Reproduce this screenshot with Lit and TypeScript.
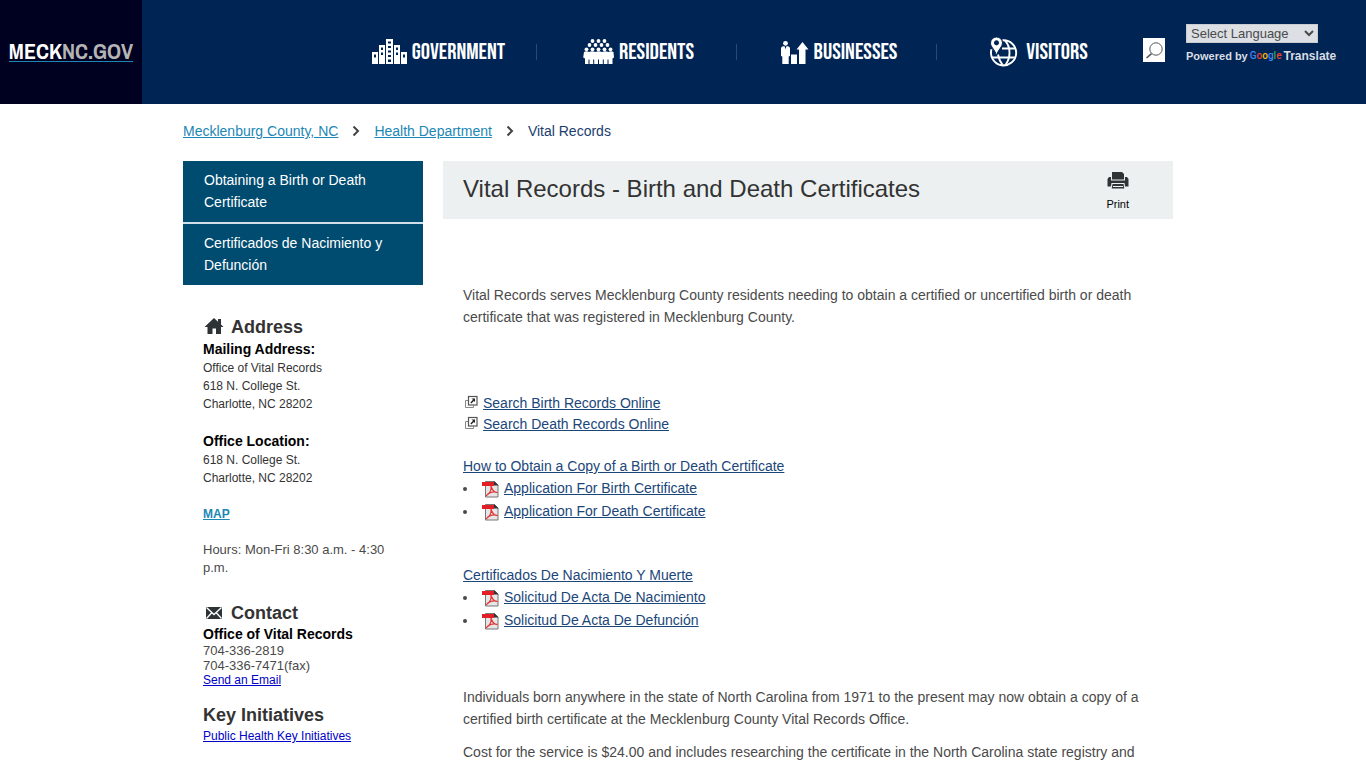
import { LitElement, html, css, svg } from "lit";
import { customElement } from "lit/decorators.js";

const governmentIcon = html`<svg class="nav-icon" width="35" height="26" viewBox="0 0 35 26" aria-hidden="true">
  <path fill="#fff" fill-rule="evenodd" d="M0 13h6v12H0zM2 15.500v3h2v-3zM7 6h6v19H7zM9 8.500v2.500h2V8.500zM9 13.500V16h2v-2.500zM14 0h7v25h-7zM16 2.500v2h3v-2zM16 7v2h3V7zM16 11.500v2h3v-2zM16 16v2h3v-2zM16 20.500V23h3v-2.500zM22 6h6v19h-6zM24 8.500v2.500h2V8.500zM24 13.500V16h2v-2.500zM29 13h6v12h-6zM31 15.500v3h2v-3z"/>
</svg>`;

const crowdRows = [
  { y: 2, xs: [9.5, 15.5, 21.5] },
  { y: 6, xs: [6.5, 12.5, 18.5, 24.5] },
  { y: 10.3, xs: [3.5, 9.5, 15.5, 21.5, 27.5] },
];
const residentsIcon = html`<svg class="nav-icon" width="31" height="26" viewBox="0 0 31 26" aria-hidden="true">
  ${crowdRows.map((r) => r.xs.map((x) => svg`<circle cx=${x} cy=${r.y} r="1.9" fill="#fff"/>`))}
  <path fill="#fff" d="M1 13q2.500-1.500 5 0q3-1.500 6.500 0q3-1.500 6.500 0q3-1.500 6.500 0q2.500-1.500 5 0l.5 5.500-1.500 1V25h-4v-4.500h-1V25h-3.700v-4.500h-1V25h-3.800v-4.500h-1V25h-3.800v-4.500h-1V25H6.500v-4.500h-1V25h-3.500v-5.500l-1.800-1z"/>
</svg>`;

const businessesIcon = html`<svg class="nav-icon" width="29" height="26" viewBox="0 0 29 26" aria-hidden="true">
  <circle cx="5.500" cy="4.300" r="2.400" fill="#fff"/>
  <path fill="#fff" d="M3 7.200h1.600l.9 3 .9-3H8q2 .3 2 2V17l-1.300.5V25H2.300v-7.500L1 17V9.200q0-1.700 2-2zM11 15.500h6V25h-6zM22.500 3l6 7.500h-3V25h-6.500V10.500h-2.500z"/>
</svg>`;

const visitorsIcon = html`<svg class="nav-icon" width="29" height="30" viewBox="0 0 29 30" aria-hidden="true">
  <g fill="none" stroke="#fff" stroke-width="1.900">
    <path d="M13.500 3.300a12.600 12.600 0 1 1-11 9"/>
    <path d="M16 3.500c6 6.500 6 18 0 25M9 17.500c.8 4.500 2.500 8 5 11M13 11.500h13.500M3 20.500h23.500"/>
  </g>
  <path fill="#fff" stroke="#002554" stroke-width="1" fill-rule="evenodd" d="M7.500 0a6 6 0 0 1 6 6c0 4-4.500 6.500-6 12.500C6 12.500 1.500 10 1.500 6a6 6 0 0 1 6-6zM7.500 3.700a2 2 0 1 0 0 4.200 2 2 0 0 0 0-4.200z"/>
</svg>`;

const searchIcon = html`<svg width="22" height="24" viewBox="0 0 22 24" aria-hidden="true">
  <g fill="none" stroke="#555"><circle cx="13" cy="11" r="6.200" stroke-width="1"/><path stroke-width="1.600" d="M8.500 15.700 3.500 20"/></g>
</svg>`;

const chevron = html`<svg class="chevron" width="8" height="12" viewBox="0 0 8 12" aria-hidden="true">
  <path d="M1.500 1.500 6 6l-4.500 4.500" fill="none" stroke="#444" stroke-width="2"/>
</svg>`;

const printIcon = html`<svg width="22" height="17" viewBox="0 0 22 17" aria-hidden="true">
  <path fill="#2e3436" d="M5 0h10l2 2v5.500H5zM2 5h2v3.500h14V5h2l1.500 2v7.500h-3.500L17.500 11h-13L4 14.500H.5V7zM5.500 12h11l.8 4.500H4.700z"/>
  <path stroke="#ecf0f1" d="M6 14.500h10"/>
</svg>`;

const houseIcon = html`<svg width="22" height="18" viewBox="0 0 22 18" aria-hidden="true">
  <path fill="#2e3436" d="M11 0 15 3.800V1h3v5.600L20.500 9H18v7h-5v-5.500H9.500V16h-5V9H1.500z"/>
</svg>`;

const mailIcon = html`<svg width="22" height="18" viewBox="0 0 22 18" aria-hidden="true">
  <rect x="3" y="3" width="16" height="12" fill="#2e3436"/>
  <path fill="none" stroke="#fff" stroke-width="1.300" d="M3.500 3.500 11 10.500l7.500-7M3.500 14.500l5-5.500M18.500 14.500l-5-5.500"/>
</svg>`;

const windowIcon = html`<svg class="window-icon" width="20" height="16" viewBox="0 0 20 16" aria-hidden="true">
  <g fill="none" stroke="#555"><path stroke="#888" d="M5 5.500H2.500v7h8V10.500"/><rect x="5.500" y="1.500" width="8.500" height="8.500" stroke-width="1.200"/></g>
  <path fill="#222" d="M8.500 3.500H12V7l-1.100-1.100-2.600 2.600-.9-.9L10 4.800z"/>
</svg>`;

const pdfIcon = html`<svg class="pdf-icon" width="17" height="19" viewBox="0 0 17 19" aria-hidden="true">
  <path fill="#e6e6e6" stroke="#777" d="M3.500 2.500h9L16 6v12H3.500z"/>
  <path fill="#333" d="M12 2v4.500h4.500z"/>
  <path fill="#e41e26" d="M0 3h12v4H0z"/>
  <path fill="none" stroke="#e23a3a" stroke-width="1.300" d="M9 7c.5 4-1.500 8-4.500 9.500 1.500-3 7-4.500 11-3-3 0-5.500-2.500-6.500-6.500"/>
</svg>`;

@customElement("app-root")
export class AppRoot extends LitElement {
  static styles = css`
    :host {
      display: block;
      background: #fff;
      color: #4a4a4a;
      font: 14px/22px "Liberation Sans", Arial, sans-serif;
    }
    h1, h2, h3, p, ul, ol { margin: 0; padding: 0; }
    svg { display: block; flex: none; }
    header {
      display: flex;
      align-items: stretch;
      height: 104px;
      background: #002554;
    }
    .logo {
      display: flex;
      align-items: center;
      justify-content: center;
      width: 142px;
      padding-bottom: 2px;
      box-sizing: border-box;
      background: #000020;
      color: #fff;
      font: bold 22px/28px "Franklin Gothic Medium Cond", "Archivo Narrow", "Roboto Condensed", "Liberation Sans", sans-serif;
      text-decoration: none;
    }
    .logo-text { border-bottom: 1px solid #1c87b5; line-height: 20px; }
    .logo-light { color: #b4b4b4; }
    nav {
      display: flex;
      flex: 0 1 800px;
      align-items: center;
      margin-left: auto;
    }
    .nav-link {
      display: flex;
      flex: 1;
      align-items: center;
      justify-content: center;
      gap: 5px;
      height: 16px;
      padding-left: 4px;
      color: #fff;
      font: 23px/24px "Bebas Neue", "Liberation Sans Narrow", "Arial Narrow", sans-serif;
      text-decoration: none;
      border-right: 1px solid #2b4a73;
    }
    .nav-link:last-child { border-right-color: transparent; }
    .nav-link.spaced { gap: 8px; }
    .tools { display: flex; width: 229px; gap: 21px; padding-left: 6px; box-sizing: border-box; }
    .search {
      align-self: flex-start;
      margin-top: 38px;
      padding: 0;
      border: 0;
      background: #fff;
    }
    .translate { padding-top: 24px; color: #d9dde3; font-size: 11px; line-height: 18px; font-weight: bold; }
    .language {
      display: block;
      width: 132px;
      height: 19px;
      padding: 0;
      border: 1px solid #c9ccd1;
      border-radius: 0;
      background: #dcdfe4;
      color: #4a4a4a;
      font: 13px/17px "Liberation Sans", Arial, sans-serif;
    }
    .powered { display: flex; align-items: center; gap: 2px; margin-top: 4px; white-space: nowrap; }
    .google { font: 500 10px/18px Roboto, sans-serif; }
    .blue { color: #4285f4; }
    .red { color: #ea4335; }
    .yellow { color: #fbbc05; }
    .green { color: #34a853; }
    .translate-word { font-size: 12px; color: #d9dde3; text-decoration: none; }
    .page { max-width: 1000px; margin: 0 auto; }
    .crumbs { display: flex; align-items: center; gap: 14px; height: 22px; padding: 16px 0 19px; list-style: none; }
    .crumbs li { display: flex; align-items: center; gap: 14px; color: #1b3d6e; }
    .crumbs a, .map { color: #1c87b5; }
    .columns { display: grid; grid-template-columns: 240px minmax(0, 1fr); gap: 20px; padding-right: 10px; }
    .menu { display: grid; gap: 2px; background: #cfe0e8; }
    .menu a { padding: 8px 21px 9px; background: #004b70; color: #fff; text-decoration: none; }
    .info { padding: 31px 30px 0 20px; font-size: 12px; line-height: 18px; }
    .info h2 { display: flex; align-items: center; gap: 6px; margin-bottom: 1px; color: #333; font-size: 18px; line-height: 22px; }
    .info h3 { color: #000; font-size: 14px; line-height: 20px; }
    .info .dark { color: #333; }
    .block { margin-bottom: 18px; }
    .map { font-weight: bold; }
    .info .larger { font-size: 13px; }
    .contact { margin-top: 25px; line-height: 15px; }
    .contact h3 { line-height: 18px; }
    .initiatives { margin-top: 16px; }
    .info .plain { color: #0000c8; }
    .title-bar {
      display: flex;
      align-items: center;
      justify-content: space-between;
      height: 56px;
      padding: 0 44px 2px 20px;
      background: #ecf0f1;
    }
    h1 { color: #333; font-size: 24px; line-height: 30px; font-weight: normal; }
    .print {
      display: grid;
      justify-items: center;
      gap: 8px;
      margin-top: 4px;
      padding: 0;
      border: 0;
      background: none;
      color: #000;
      font: 11px/14px "Liberation Sans", Arial, sans-serif;
    }
    .content { padding: 65px 20px 0; }
    .content a { color: #1b4679; }
    .searches { padding-top: 65px; line-height: 21px; }
    .searches a { display: flex; align-items: center; width: fit-content; text-decoration: none; }
    .searches span { text-decoration: underline; }
    .window-icon { margin-bottom: 2px; }
    .group { padding-top: 21px; line-height: 21px; }
    .group + .group { padding-top: 42px; }
    .files li { display: flex; align-items: center; height: 23px; }
    .files li::before { content: ""; width: 4px; height: 4px; margin-right: 15px; border-radius: 2px; background: #4a4a4a; }
    .pdf-icon { margin-right: 5px; }
    .notes { display: grid; gap: 11px; padding-top: 54px; }
  `;

  render() {
    return html`
      <header>
        <a class="logo" href="#"><span class="logo-text">MECK<span class="logo-light">NC.GOV</span></span></a>
        <nav aria-label="Main">
          <a class="nav-link" href="#">${governmentIcon}<span>GOVERNMENT</span></a>
          <a class="nav-link" href="#">${residentsIcon}<span>RESIDENTS</span></a>
          <a class="nav-link" href="#">${businessesIcon}<span>BUSINESSES</span></a>
          <a class="nav-link spaced" href="#">${visitorsIcon}<span>VISITORS</span></a>
        </nav>
        <div class="tools">
          <button class="search" type="button" aria-label="Search">${searchIcon}</button>
          <div class="translate">
            <select class="language" aria-label="Select Language"><option>Select Language</option></select>
            <div class="powered">
              <span>Powered by</span>
              <span class="google"><span class="blue">G</span><span class="red">o</span><span class="yellow">o</span><span class="blue">g</span><span class="green">l</span><span class="red">e</span></span>
              <a class="translate-word" href="#">Translate</a>
            </div>
          </div>
        </div>
      </header>
      <div class="page">
        <ol class="crumbs">
          <li><a href="#">Mecklenburg County, NC</a>${chevron}</li>
          <li><a href="#">Health Department</a>${chevron}</li>
          <li>Vital Records</li>
        </ol>
        <div class="columns">
          <aside>
            <div class="menu">
              <a href="#">Obtaining a Birth or Death Certificate</a>
              <a href="#">Certificados de Nacimiento y Defunción</a>
            </div>
            <div class="info">
              <h2>${houseIcon}Address</h2>
              <h3>Mailing Address:</h3>
              <p class="block dark">Office of Vital Records<br />618 N. College St.<br />Charlotte, NC 28202</p>
              <h3>Office Location:</h3>
              <p class="block dark">618 N. College St.<br />Charlotte, NC 28202</p>
              <p class="block"><a class="map" href="#">MAP</a></p>
              <p class="larger">Hours: Mon-Fri 8:30 a.m. - 4:30 p.m.</p>
              <section class="contact">
                <h2>${mailIcon}Contact</h2>
                <h3>Office of Vital Records</h3>
                <p class="larger">704-336-2819<br />704-336-7471(fax)</p>
                <a class="plain" href="#">Send an Email</a>
              </section>
              <section class="initiatives">
                <h2>Key Initiatives</h2>
                <a class="plain" href="#">Public Health Key Initiatives</a>
              </section>
            </div>
          </aside>
          <main>
            <div class="title-bar">
              <h1>Vital Records - Birth and Death Certificates</h1>
              <button class="print" type="button">${printIcon}<span>Print</span></button>
            </div>
            <div class="content">
              <p>Vital Records serves Mecklenburg County residents needing to obtain a certified or uncertified birth or death certificate that was registered in Mecklenburg County.</p>
              <div class="searches">
                <a href="#">${windowIcon}<span>Search Birth Records Online</span></a>
                <a href="#">${windowIcon}<span>Search Death Records Online</span></a>
              </div>
              <section class="group">
                <a href="#">How to Obtain a Copy of a Birth or Death Certificate</a>
                <ul class="files">
                  <li>${pdfIcon}<a href="#">Application For Birth Certificate</a></li>
                  <li>${pdfIcon}<a href="#">Application For Death Certificate</a></li>
                </ul>
              </section>
              <section class="group">
                <a href="#">Certificados De Nacimiento Y Muerte</a>
                <ul class="files">
                  <li>${pdfIcon}<a href="#">Solicitud De Acta De Nacimiento</a></li>
                  <li>${pdfIcon}<a href="#">Solicitud De Acta De Defunción</a></li>
                </ul>
              </section>
              <div class="notes">
                <p>Individuals born anywhere in the state of North Carolina from 1971 to the present may now obtain a copy of a certified birth certificate at the Mecklenburg County Vital Records Office.</p>
                <p>Cost for the service is $24.00 and includes researching the certificate in the North Carolina state registry and</p>
              </div>
            </div>
          </main>
        </div>
      </div>
    `;
  }
}
